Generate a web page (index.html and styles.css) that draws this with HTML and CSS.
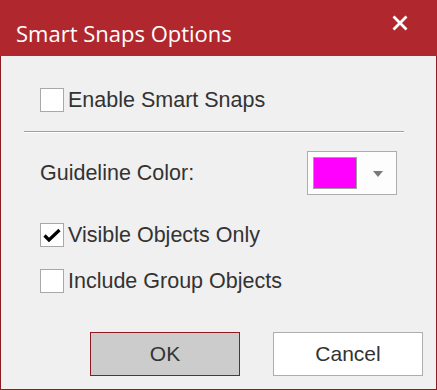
FILE: index.html
```html
<!DOCTYPE html>
<html>
<head>
<meta charset="utf-8">
<link rel="stylesheet" href="styles.css">
</head>
<body>
<div class="window">
  <div class="titlebar">
    <span class="title">Smart Snaps Options</span>
    <svg class="close" width="16" height="16" viewBox="0 0 16 16"><path d="M1.5 1.5 L14.5 14.5 M14.5 1.5 L1.5 14.5" stroke="#fff" stroke-width="2.8" fill="none"/></svg>
  </div>
  <div class="content">
    <div class="row row-enable">
      <span class="check"></span>
      <span class="label">Enable Smart Snaps</span>
    </div>
    <div class="separator"></div>
    <div class="row row-color">
      <span class="label-plain">Guideline Color:</span>
      <div class="picker">
        <span class="swatch"></span>
        <span class="arrow"></span>
      </div>
    </div>
    <div class="row row-visible">
      <span class="check"><svg width="22" height="22" viewBox="0 0 22 22"><path d="M3.5 11.5 L8 16 L18.5 6" stroke="#000" stroke-width="3.2" fill="none"/></svg></span>
      <span class="label">Visible Objects Only</span>
    </div>
    <div class="row row-group">
      <span class="check"></span>
      <span class="label">Include Group Objects</span>
    </div>
    <div class="buttons">
      <button class="btn btn-ok">OK</button>
      <button class="btn btn-cancel">Cancel</button>
    </div>
  </div>
</div>
</body>
</html>
```
FILE: styles.css
```css
html, body {
  margin: 0;
  padding: 0;
}
body {
  width: 437px;
  height: 390px;
  overflow: hidden;
  background: #f0f0f0;
}
.window {
  width: 437px;
  height: 390px;
  display: flex;
  flex-direction: column;
}
.titlebar {
  height: 56px;
  flex: none;
  background: #b0282e;
  display: flex;
  justify-content: space-between;
  align-items: flex-start;
  padding: 0 29px 0 16px;
  box-sizing: border-box;
}
.title {
  font-family: "Open Sans", "Noto Sans", sans-serif;
  font-size: 22px;
  line-height: 30px;
  padding-top: 18px;
  color: #fff;
}
.close {
  margin-top: 15px;
  display: block;
}
.content {
  flex: 1;
  background: #f0f0f0;
  border: 1px solid #8d1b21;
  border-top: none;
  display: flex;
  flex-direction: column;
  font-family: "Liberation Sans", Arial, sans-serif;
  font-size: 21.5px;
  color: #333;
}
.row {
  display: flex;
  align-items: center;
  padding-left: 39px;
}
.row-enable { margin-top: 32px; }
.row-color {
  margin-top: 18px;
  justify-content: space-between;
  padding-right: 39px;
}
.row-visible { margin-top: 28px; }
.row-group { margin-top: 22px; }
.check {
  width: 24px;
  height: 24px;
  box-sizing: border-box;
  border: 1px solid #a8a8a8;
  background: #fff;
  display: flex;
  flex: none;
}
.check svg { display: block; }
.label {
  margin-left: 4px;
  line-height: 24px;
}
.label-plain {
  line-height: 24px;
}
.separator {
  margin: 19px 0 0 23px;
  width: 380px;
  border-top: 1px solid #a0a0a0;
  border-bottom: 1px solid #fff;
}
.picker {
  width: 90px;
  height: 44px;
  box-sizing: border-box;
  border: 1px solid #adadad;
  background: #fdfdfd;
  display: flex;
  align-items: center;
  padding-left: 5px;
}
.swatch {
  width: 44px;
  height: 32px;
  box-sizing: border-box;
  border: 1px solid #a0a0a0;
  background: #ff00ff;
}
.arrow {
  margin-left: 16px;
  margin-top: 2px;
  width: 0;
  height: 0;
  border-left: 5px solid transparent;
  border-right: 5px solid transparent;
  border-top: 6px solid #7a7a7a;
}
.buttons {
  margin-top: 39px;
  display: flex;
  justify-content: flex-end;
  gap: 33px;
  padding-right: 13px;
}
.btn {
  width: 150px;
  height: 44px;
  box-sizing: border-box;
  font-family: "Liberation Sans", Arial, sans-serif;
  font-size: 21px;
  color: #333;
  padding: 0;
}
.btn-ok {
  background: #cccccc;
  border: 1px solid #8d1b21;
}
.btn-cancel {
  background: #fff;
  border: 1px solid #adadad;
}
```
